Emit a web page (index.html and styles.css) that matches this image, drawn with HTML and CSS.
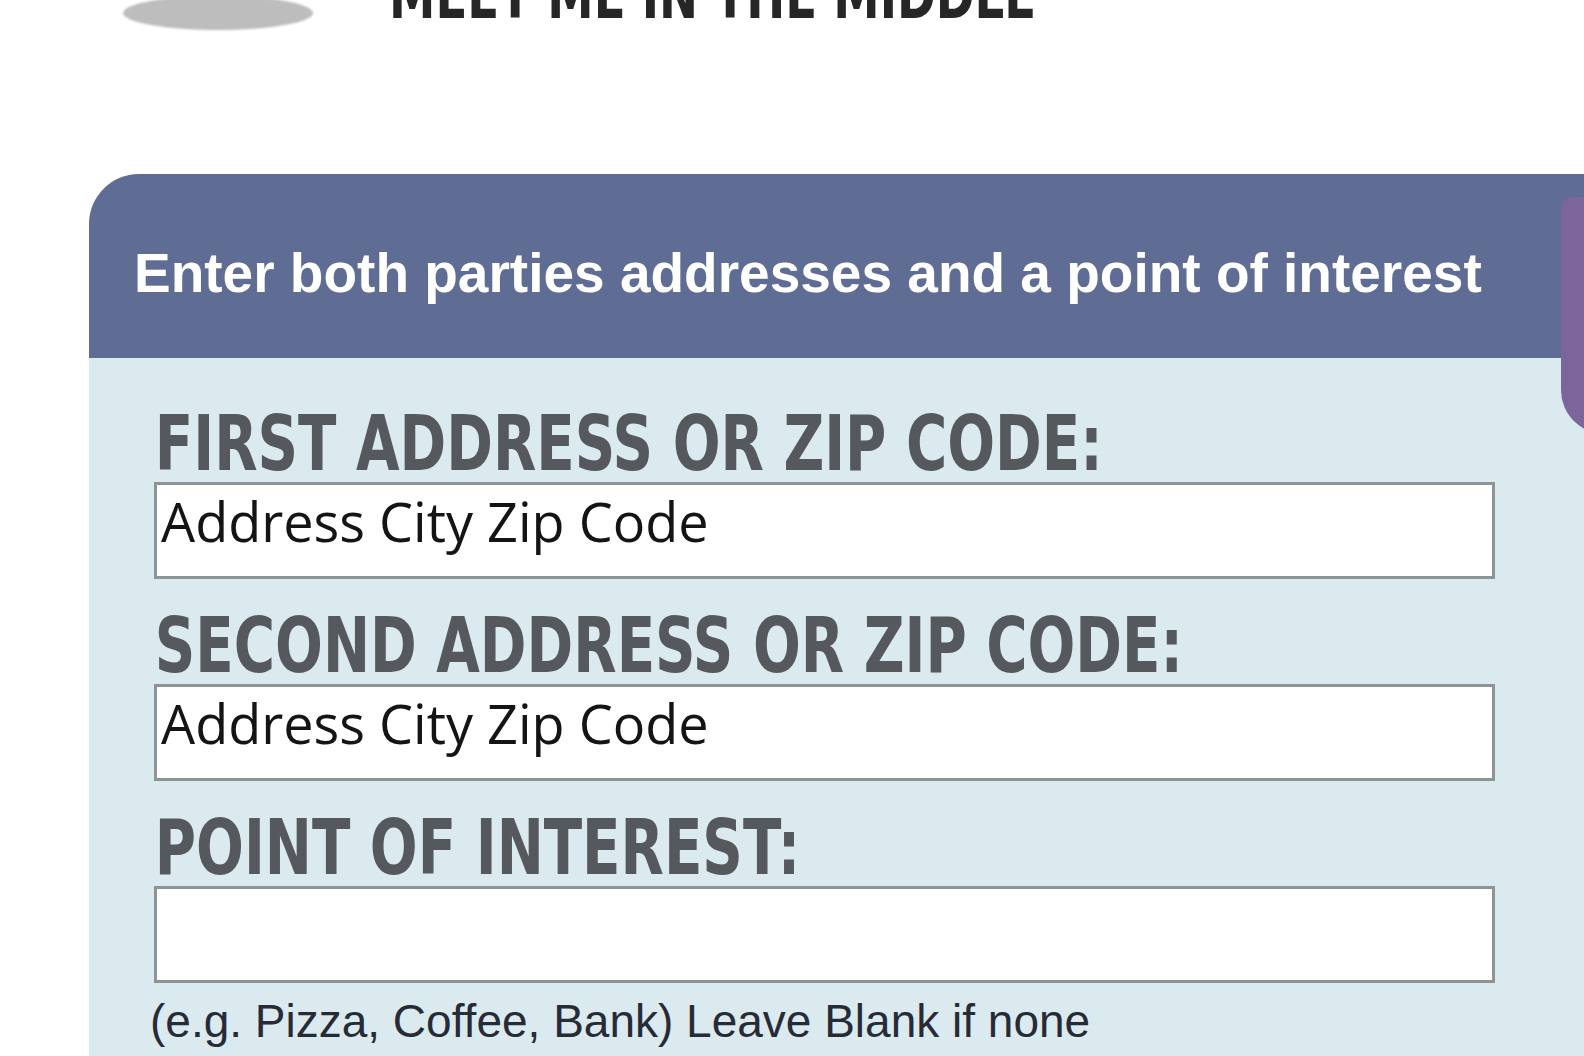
FILE: index.html
```html
<!DOCTYPE html>
<html lang="en">
<head>
  <meta charset="UTF-8">
  <meta name="viewport" content="width=device-width, initial-scale=1.0">
  <title>Meet Me In The Middle</title>
  <link rel="stylesheet" href="styles.css">
</head>
<body>
  <div class="masthead">
    <div class="logo"></div>
    <div class="site-title">MEET ME IN THE MIDDLE</div>
  </div>

  <form class="panel">
    <div class="side-tab"></div>
    <div class="panel-head">Enter both parties addresses and a point of interest</div>
    <div class="panel-body">
      <div class="field">
        <label for="first">FIRST ADDRESS OR ZIP CODE:</label>
        <input type="text" id="first" value="Address City Zip Code">
      </div>
      <div class="field">
        <label for="second">SECOND ADDRESS OR ZIP CODE:</label>
        <input type="text" id="second" value="Address City Zip Code">
      </div>
      <div class="field">
        <label for="poi">POINT OF INTEREST:</label>
        <input type="text" id="poi" value="">
      </div>
      <p class="hint">(e.g. Pizza, Coffee, Bank) Leave Blank if none</p>
    </div>
  </form>
</body>
</html>
```

FILE: styles.css
```css
body {
  margin: 0;
  background: #fff;
  font-family: "Liberation Sans", Arial, sans-serif;
  overflow: hidden;
}
.masthead {
  display: flex;
  align-items: flex-start;
  height: 174px;
}
.logo {
  width: 190px;
  height: 34px;
  margin: -4px 0 0 123px;
  border-radius: 50%;
  background: #bdbdbd;
  filter: blur(1px);
}
.site-title {
  margin: -36px 0 0 76px;
  font-family: "DejaVu Sans Condensed", "DejaVu Sans", sans-serif;
  font-weight: bold;
  font-size: 64px;
  line-height: 1;
  color: #262626;
  white-space: nowrap;
  transform: scaleX(0.81);
  transform-origin: left top;
  filter: blur(0.6px);
}
.panel {
  position: relative;
  width: 1600px;
  margin: 0 0 0 89px;
  border-top-left-radius: 50px;
  overflow: hidden;
  background: #dbeaef;
}
.side-tab {
  position: absolute;
  left: 1472px;
  top: 23px;
  width: 80px;
  height: 237px;
  background: #7b659b;
  border-radius: 12px 0 0 44px;
}
.panel-head {
  height: 184px;
  box-sizing: border-box;
  padding: 72px 0 0 45px;
  background: #5f6d94;
  color: #fff;
  font-weight: bold;
  font-size: 55px;
  line-height: 1;
}
.panel-body {
  padding: 48px 0 40px 65px;
}
.field {
  display: flex;
  flex-direction: column;
  align-items: flex-start;
  margin-bottom: 29px;
}
.field label {
  padding-left: 1px;
  font-family: "DejaVu Sans Condensed", "DejaVu Sans", sans-serif;
  font-weight: bold;
  font-size: 76px;
  line-height: 1;
  color: #55595e;
  white-space: nowrap;
  transform: scaleX(0.823);
  transform-origin: left top;
}
.field input {
  width: 1341px;
  height: 97px;
  box-sizing: border-box;
  margin: 0;
  padding: 0 4px 19px;
  border: 3px solid #8e9396;
  background: #fff;
  font-family: "Open Sans", sans-serif;
  font-size: 54px;
  color: #141414;
  outline: none;
}
.hint {
  margin: -14px 0 0 -4px;
  font-size: 46px;
  line-height: 1;
  color: #272b35;
}
```
